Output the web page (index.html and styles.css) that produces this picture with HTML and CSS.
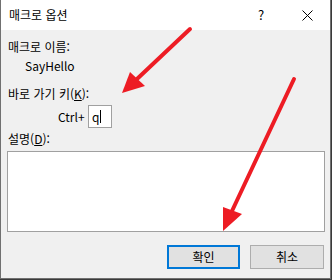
FILE: index.html
```html
<!DOCTYPE html>
<html lang="ko">

<head>
    <meta charset="UTF-8">
    <title>매크로 옵션</title>
    <link rel="stylesheet" href="styles.css">
</head>

<body>
    <div class="dialog">
        <div class="title-bar">
            <span class="title">매크로 옵션</span>
            <span class="caption-btn">?</span>
            <span class="caption-btn">
                <svg width="11" height="11" viewBox="0 0 11 11">
                    <path d="M0.5 0.5 L10.5 10.5 M10.5 0.5 L0.5 10.5" stroke="#000" stroke-width="1" fill="none" />
                </svg>
            </span>
        </div>

        <div class="content">
            <div class="label">매크로 이름:</div>
            <div class="macro-name">SayHello</div>

            <div class="label gap-top">바로 가기 키(<u>K</u>):</div>
            <div class="shortcut-row">
                <span class="ctrl">Ctrl+</span>
                <span class="key-box">q<span class="caret"></span></span>
            </div>

            <div class="label small-gap">설명(<u>D</u>):</div>
            <div class="desc-box"></div>

            <div class="buttons">
                <div class="btn default">확인</div>
                <div class="btn">취소</div>
            </div>
        </div>

        <!-- 빨간 화살표 표시 -->
        <svg class="arrows" width="331" height="279" viewBox="0 0 331 279">
            <line x1="190" y1="29" x2="137" y2="79" stroke="#ed1c24" stroke-width="4" stroke-linecap="round" />
            <polygon points="122,93 130,72 145,86" fill="#ed1c24" />
            <line x1="294" y1="79" x2="232" y2="211" stroke="#ed1c24" stroke-width="4" stroke-linecap="round" />
            <polygon points="223,231 223,207 242,214" fill="#ed1c24" />
        </svg>
    </div>
</body>

</html>
```

FILE: styles.css
```css
* {
    margin: 0;
    padding: 0;
    box-sizing: border-box;
}

body {
    font-family: "Noto Sans CJK KR", sans-serif;
    font-size: 12px;
    line-height: 16px;
    color: #000;
    background: #3a3a3a;
}

.dialog {
    position: relative;
    width: 331px;
    height: 279px;
    background: #f0f0f0;
    border: 1px solid #707070;
    border-top: none;
}

.title-bar {
    height: 30px;
    background: #fff;
    display: flex;
    align-items: center;
}

.title {
    flex: 1;
    padding-left: 8px;
}

.caption-btn {
    width: 46px;
    height: 30px;
    display: flex;
    align-items: center;
    justify-content: center;
    font-size: 13px;
}

.content {
    padding: 9px 6px 0 6px;
}

.label {
    padding-left: 1px;
}

.macro-name {
    padding-left: 18px;
    margin-top: 3px;
}

.gap-top {
    margin-top: 12px;
}

.small-gap {
    margin-top: 3px;
}

.shortcut-row {
    display: flex;
    align-items: center;
    margin-top: 3px;
    padding-left: 51px;
}

.ctrl {
    width: 30px;
}

.key-box {
    width: 24px;
    height: 23px;
    background: #fff;
    border: 1px solid #a0a0a0;
    padding-left: 3px;
    display: flex;
    align-items: center;
}

.caret {
    width: 1px;
    height: 13px;
    background: #000;
    margin-left: 1px;
}

.desc-box {
    margin-top: 4px;
    width: 318px;
    height: 81px;
    background: #fff;
    border: 1px solid #a0a0a0;
}

.buttons {
    display: flex;
    justify-content: flex-end;
    gap: 10px;
    margin-top: 13px;
    padding-right: 0;
}

.btn {
    width: 74px;
    height: 24px;
    background: #e1e1e1;
    border: 1px solid #adadad;
    display: flex;
    align-items: center;
    justify-content: center;
}

.btn.default {
    width: 73px;
    border: 2px solid #0078d7;
}

.arrows {
    position: absolute;
    top: 0;
    left: -1px;
    pointer-events: none;
}
```
